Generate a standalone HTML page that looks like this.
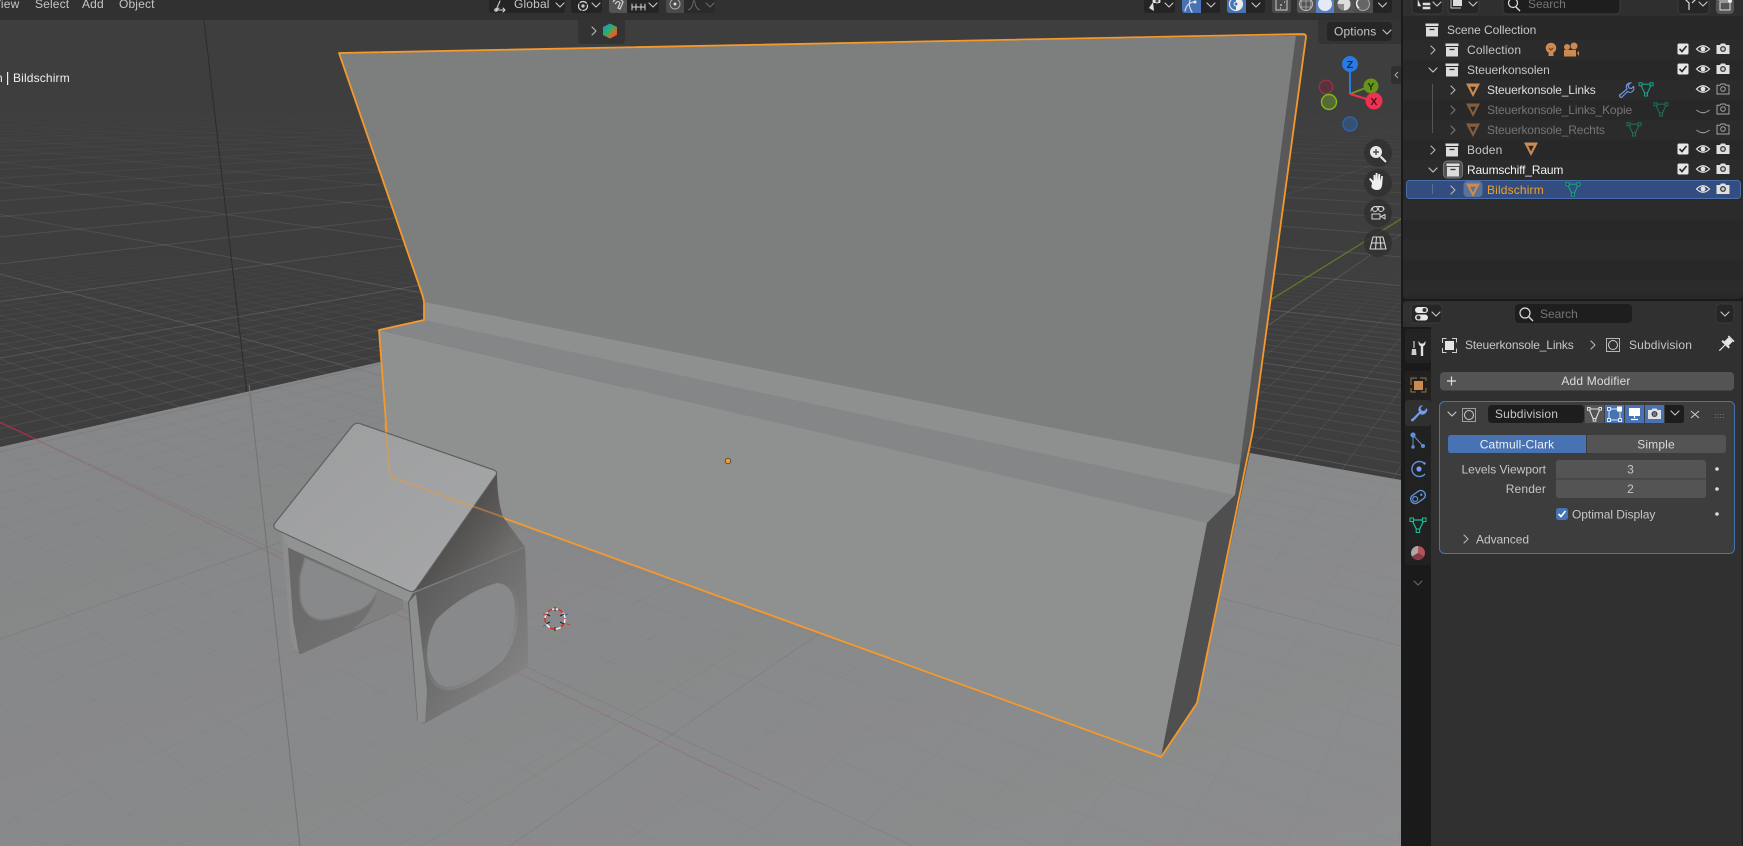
<!DOCTYPE html>
<html><head><meta charset="utf-8"><title>Blender</title>
<style>
html,body{margin:0;padding:0;background:#1a1a1a;width:1743px;height:846px;overflow:hidden}
#wrap{position:relative;width:1743px;height:846px;overflow:hidden;contain:strict}
svg{display:block;overflow:hidden}
text{font-family:"Liberation Sans",sans-serif;font-size:12px;fill:#c6c6c6;letter-spacing:.15px}
.m{text-anchor:middle}.e{text-anchor:end}
.dim{fill:#757575}.w{fill:#efefef}
.n{letter-spacing:-.15px}.t{letter-spacing:-.05px}
.ic{fill:none;stroke:#d8d8d8;stroke-width:1.2;stroke-linecap:round;stroke-linejoin:round}
</style></head><body><div id="wrap">
<svg xmlns="http://www.w3.org/2000/svg" width="1743" height="846" viewBox="0 0 1743 846">
<defs>
<linearGradient id="maj" gradientUnits="userSpaceOnUse" x1="0" y1="110" x2="0" y2="300"><stop offset="0" stop-color="#fff" stop-opacity="0"/><stop offset=".3" stop-color="#fff" stop-opacity=".04"/><stop offset="1" stop-color="#fff" stop-opacity=".13"/></linearGradient>
<linearGradient id="min" gradientUnits="userSpaceOnUse" x1="0" y1="250" x2="0" y2="350"><stop offset="0" stop-color="#fff" stop-opacity="0"/><stop offset="1" stop-color="#fff" stop-opacity=".065"/></linearGradient>
<linearGradient id="flr" x1="0" y1="0" x2="1" y2="1"><stop offset="0" stop-color="#858687"/><stop offset=".5" stop-color="#88898a"/><stop offset="1" stop-color="#8c8d8e"/></linearGradient>
<linearGradient id="slab" x1="0" y1="0" x2="1" y2="1"><stop offset="0" stop-color="#9c9d9e"/><stop offset="1" stop-color="#a6a7a8"/></linearGradient>
<linearGradient id="side" gradientUnits="userSpaceOnUse" x1="450" y1="525" x2="500" y2="562"><stop offset="0" stop-color="#4f4d4c"/><stop offset=".5" stop-color="#5d5b5a"/><stop offset="1" stop-color="#6f6e6d"/></linearGradient>
<linearGradient id="face" gradientUnits="userSpaceOnUse" x1="410" y1="600" x2="530" y2="680"><stop offset="0" stop-color="#5c5c5c"/><stop offset="1" stop-color="#858585"/></linearGradient>
<linearGradient id="face2" gradientUnits="userSpaceOnUse" x1="285" y1="540" x2="400" y2="620"><stop offset="0" stop-color="#666"/><stop offset="1" stop-color="#747474"/></linearGradient>
<linearGradient id="rim" gradientUnits="userSpaceOnUse" x1="430" y1="600" x2="515" y2="680"><stop offset="0" stop-color="#5e5e5e"/><stop offset=".6" stop-color="#7c7c7c"/><stop offset="1" stop-color="#9a9a9a"/></linearGradient>
<linearGradient id="hex" x1="0" y1=".15" x2=".85" y2="1"><stop offset="0" stop-color="#1e8fd0"/><stop offset=".45" stop-color="#2fb060"/><stop offset=".8" stop-color="#e8602a"/><stop offset="1" stop-color="#e0302e"/></linearGradient>
<clipPath id="flc"><polygon points="0,447 380,362 1250,453 1401,480 1401,846 0,846"/></clipPath>
<clipPath id="vp"><rect x="0" y="0" width="1401" height="846"/></clipPath>

<symbol id="box" overflow="visible" viewBox="-8 -8 16 16" width="16" height="16"><path d="M-6.5-6.5H6.5V-4H-6.5ZM-6-3H6V6.5H-6Z" fill="#dcdcdc"/><path d="M-2.5-.5H2.5" stroke="#333" stroke-width="1.3"/></symbol>
<symbol id="obj" overflow="visible" viewBox="-8 -8 16 16" width="16" height="16"><path fill-rule="evenodd" d="M-7-6.5H7L0 7ZM-2.8-3.2H2.8L0 2.5Z" fill="#cc8a50"/></symbol>
<symbol id="mesh" overflow="visible" viewBox="-8 -8 16 16" width="16" height="16"><path d="M-5.5-4.8H5.5L.8 5.5H-.8Z" fill="none" stroke="#12a88a" stroke-width="1.1"/><path d="M-7-6.3h3v3h-3zM4-6.3h3v3h-3zM-1.5 4h3v3h-3z" fill="#2b2b2b" stroke="#12a88a" stroke-width="1"/></symbol>
<symbol id="eye" overflow="visible" viewBox="-8 -8 16 16" width="16" height="16"><path d="M-6.5 0Q0-6.5 6.5 0Q0 6.5-6.5 0Z" fill="none" stroke="#e4e4e4" stroke-width="1.2"/><circle r="2.4" fill="#e4e4e4"/></symbol>
<symbol id="eyeo" overflow="visible" viewBox="-8 -8 16 16" width="16" height="16"><path d="M-6.5-1Q0 4.5 6.5-1" fill="none" stroke="#9a9a9a" stroke-width="1.1"/></symbol>
<symbol id="cam" overflow="visible" viewBox="-8 -8 16 16" width="16" height="16"><path d="M-6.5-4H-3L-2-5.5H2L3-4H6.5V5H-6.5Z" fill="#e0e0e0"/><circle r="3" fill="#444"/><circle r="1.6" fill="#ccc"/></symbol>
<symbol id="camo" overflow="visible" viewBox="-8 -8 16 16" width="16" height="16"><path d="M-6-3.7H-3L-2-5H2L3-3.7H6V5H-6Z" fill="none" stroke="#a6a6a6"/><circle r="2.3" fill="none" stroke="#a6a6a6"/></symbol>
<symbol id="chk" overflow="visible" viewBox="-8 -8 16 16" width="16" height="16"><rect x="-5.5" y="-5.5" width="11" height="11" rx="1.5" fill="#e6e6e6"/><path d="M-3.5 0L-1 2.5 3.5-3" fill="none" stroke="#2a2a2a" stroke-width="1.6"/></symbol>
<symbol id="cr" overflow="visible" viewBox="-8 -8 16 16" width="16" height="16"><path d="M-2-4L2 0-2 4" fill="none" stroke="#b8b8b8" stroke-width="1.1" stroke-linecap="round" stroke-linejoin="round"/></symbol>
<symbol id="cd" overflow="visible" viewBox="-8 -8 16 16" width="16" height="16"><path d="M-4-2L0 2 4-2" fill="none" stroke="#c8c8c8" stroke-width="1.1" stroke-linecap="round" stroke-linejoin="round"/></symbol>
</defs>

<!-- VIEWPORT -->
<g clip-path="url(#vp)">
<rect width="1401" height="846" fill="#3e3e3e"/>
<g id="gridDark"></g>
<line x1="204" y1="20" x2="259" y2="500" stroke="#2c2c2c" stroke-width="1"/>
<line x1="0" y1="422" x2="40" y2="441" stroke="#b02840" stroke-width="1.2"/>
<line x1="1272" y1="299" x2="1401" y2="219" stroke="#5d7d2a" stroke-width="1.2"/>
<polygon points="0,447 380,362 1250,453 1401,480 1401,846 0,846" fill="url(#flr)"/>
<g id="gridFloor" clip-path="url(#flc)"></g>
<line x1="249" y1="385" x2="300" y2="846" stroke="#717273" stroke-width="1"/>
<line x1="35" y1="439" x2="760" y2="790" stroke="#a05058" stroke-width="1" opacity=".33"/>
<line x1="422" y1="846" x2="740" y2="648" stroke="#72885a" stroke-width="1" opacity=".35"/>

<!-- Mesh -->
<polygon points="339,53 1306,35 1240,465 424,302" fill="#7d7f7e"/>
<polygon points="425,302 1240,465 1235,495 424,321" fill="#8e908f"/>
<polygon points="424,320 379,330 1207,523 1235,495" fill="#858688"/>
<polygon points="379,330 390,477 1161,757 1207,523" fill="#8f9191"/>
<polygon points="1296,36 1306,36 1253,430 1250,453 1197,703 1161,757 1207,523 1235,495 1240,465" fill="#4f4f4f"/>
<polygon points="1296,36 1306,36 1253,430 1240,465" fill="#575857"/>
<path d="M339,53 L1303,34 Q1306,34 1306,37 L1253,430 L1197,703 L1161,757 L396,479 Q390,477 389.5,470 L379,330 L424,320 L424,302 Q423,296 420,288 Z" fill="none" stroke="#f5992b" stroke-width="1.8" stroke-linejoin="round"/>

<!-- Stand -->
<path d="M287,547 L403,600 L403,609 L301,654 Q296,654 293,648 L282,533 Z" fill="url(#face2)"/>
<path d="M305,558 L378,590 Q372,604 360,610 Q340,618 322,620 Q312,619 307,613 Q301,606 300,597 L300,577 Z" fill="#88898a" stroke="#7d7d7d" stroke-width="1.5"/>
<path d="M378,590 L403,601 L403,609 L352,630 Q372,615 378,590Z" fill="#808080"/>
<polygon points="281,531 414,593 409,602 403,600 287,547" fill="#919292"/>
<polygon points="281,531 288,548 293,620 299,654 294,650 291,640" fill="#8c8d8d"/>
<path d="M497,471 C497,490 499,505 503,517 L525,547 L413,592 Z" fill="url(#side)"/>
<path d="M413,593 L525,547 C527,590 528,640 528,662 Q528,667 525,669 L425,723 Q419,725 417,718 L408,602 Z" fill="url(#face)"/>
<path d="M497,583 C510,584 515,595 515,610 C515,630 510,645 500,658 C485,672 465,684 450,687 C435,688 427,672 427,653 C428,640 430,630 436,620 C445,610 470,590 497,583Z" fill="#88898a" stroke="url(#rim)" stroke-width="7" paint-order="stroke"/>
<polygon points="409,602 416,594 427,690 425,722 420,723 418,720" fill="#8d8e8e"/>
<path d="M413,593 L525,547" stroke="#7e7e7e" stroke-width="1"/>
<path d="M353,425 Q357,422 361,424 L494,470 Q498,472 496,475 L416,589 Q413,593 409,591 L277,530 Q272,527 275,523 Z" fill="url(#slab)" stroke="#5f5f5f" stroke-width="1.2" stroke-linejoin="round"/>
<path d="M385,423 L389.5,470 Q390,477 396,479 L503,517" fill="none" stroke="#f5992b" stroke-width="1.7" stroke-linejoin="round" opacity=".5"/>
<circle cx="728" cy="461" r="2.8" fill="#f5992b" stroke="#444" stroke-width=".8"/>
<!-- 3D cursor -->
<circle cx="555" cy="619" r="10" fill="none" stroke="#e02828" stroke-width="1.4"/>
<circle cx="555" cy="619" r="10" fill="none" stroke="#f4f4f4" stroke-width="1.5" stroke-dasharray="6 5.5" stroke-dashoffset="2"/>
<path d="M555 603v5M555 630v5" stroke="#6aa84a" stroke-width="1.2"/>
<path d="M555 607v4M555 627v4M546 614l4 2M560 622l4 2M546 624l4-2M560 616l4-2" stroke="#222" stroke-width="1"/>
<path d="M543 614l3 1M567 624l3 1" stroke="#d33" stroke-width="1"/><path d="M543 626l3-1M565 615l3-1" stroke="#36d" stroke-width="1"/>

<!-- Gizmo -->
<line x1="1350" y1="94" x2="1350" y2="70" stroke="#2a7ae2" stroke-width="2"/>
<line x1="1350" y1="94" x2="1368" y2="87" stroke="#6a9a1e" stroke-width="2"/>
<line x1="1350" y1="94" x2="1370" y2="100" stroke="#ee3050" stroke-width="2"/>
<circle cx="1350" cy="64" r="8" fill="#2a7ae2"/><text x="1350" y="68" class="m" style="font-size:10.5px;font-weight:bold;fill:#0c2a54">Z</text>
<circle cx="1371" cy="86" r="7.5" fill="#64941c"/><text x="1371" y="90" class="m" style="font-size:10.5px;font-weight:bold;fill:#22340a">Y</text>
<circle cx="1374" cy="101" r="8.5" fill="#f0304f"/><text x="1374" y="105" class="m" style="font-size:10.5px;font-weight:bold;fill:#4f0f1c">X</text>
<circle cx="1326" cy="87" r="6.7" fill="#57343c" stroke="#94304a" stroke-width="1.4"/>
<circle cx="1329" cy="102" r="7.5" fill="#566b33" stroke="#7dbb1a" stroke-width="1.4"/>
<circle cx="1350" cy="124" r="7" fill="#37506f" stroke="#2a64b0" stroke-width="1.4"/>

<!-- nav buttons -->
<g fill="#303030" fill-opacity=".8"><circle cx="1378" cy="153" r="14"/><circle cx="1378" cy="183" r="14"/><circle cx="1378" cy="213" r="14"/><circle cx="1378" cy="243" r="14"/></g>
<circle cx="1376" cy="152" r="6" fill="#e8e8e8"/><path d="M1380.5 156.5L1386 162" stroke="#e8e8e8" stroke-width="2"/><path d="M1373 152h6M1376 149v6" stroke="#333" stroke-width="1.2"/>
<path d="M1372 183 l-3-4 1.5-1 3 3 V175 h1.8 v5 l.4-7 h1.8 l.3 7 .6-6 h1.8 l-.1 7 1.2-5 h1.6 l-.8 9 q-.5 5-5 5 q-4 0-5.8-3Z" fill="#efefef"/>
<g class="ic" style="stroke-width:1"><rect x="1372" y="214" width="8" height="5"/><path d="M1381 216.5l4-2v4.5z"/><circle cx="1375" cy="209" r="2.5"/><circle cx="1381" cy="209" r="2.5"/><path d="M1371 211q0-4 5-4.5h5q3 0 3 3"/></g>
<g class="ic" style="stroke-width:1.1"><path d="M1373 237h10l3 12h-16zM1371.5 243h13M1376.5 237l-1 12M1380 237l1 12"/></g>

<!-- Tab tool region -->
<path d="M578 20h47v20q0 4-4 4h-39q-4 0-4-4z" fill="#333"/>
<use href="#cr" x="586" y="23"/>
<polygon points="610,23.5 617,27 617,35 610,38.5 603,35 603,27" fill="url(#hex)"/>

<!-- Options -->
<path d="M1318 20h83v24h-79q-4 0-4-4z" fill="#343434"/>
<rect x="1327" y="22" width="65" height="19" rx="4" fill="#262626"/>
<text x="1334" y="35.5">Options</text><use href="#cd" x="1379" y="24"/>
<path d="M1401 66h-6q-4 0-4 4v10q0 4 4 4h6z" fill="#303030"/><path d="M1398 72l-3 3 3 3" fill="none" stroke="#aaa"/>

<text x="-4" y="82" class="w">n</text><rect x="7" y="72" width="1.2" height="13" fill="#eee"/><text x="13" y="82" class="w">Bildschirm</text>
</g>

<!-- TOP BAR -->
<rect width="1401" height="20" fill="#313131"/>
<text x="-7" y="8" fill="#ccc">View</text><text x="35" y="8">Select</text><text x="82" y="8">Add</text><text x="119" y="8">Object</text>
<path d="M489-5h76v15q0 3-3 3h-70q-3 0-3-3z" fill="#242424"/>
<g class="ic" style="stroke-width:1"><path d="M496 10L500 1M496 10h9M496 10l3-2M503 8l2 2-2 2"/><circle cx="496" cy="10" r="1.3"/></g>
<text x="514" y="8">Global</text><use href="#cd" x="552" y="-3"/>
<path d="M571-5h31v15q0 3-3 3h-25q-3 0-3-3z" fill="#242424"/>
<g class="ic"><circle cx="583" cy="6" r="4.5" stroke-dasharray="7 2"/><circle cx="583" cy="6" r="1" /></g><use href="#cd" x="588" y="-3"/>
<path d="M609-5h50v15q0 3-3 3h-44q-3 0-3-3z" fill="#242424"/><path d="M609-5h18v18h-15q-3 0-3-3z" fill="#545454"/>
<path d="M613 2q5-7 10 0l-3 7-2-1 2-5q-2-3-4 0l-1 1" fill="none" stroke="#cfcfcf" stroke-width="1.3"/>
<g class="ic" style="stroke-width:1"><path d="M632 7h13M632 4v6M636 4v6M641 4v6M645 4v6"/></g><use href="#cd" x="645" y="-3"/>
<path d="M666-5h49v15q0 3-3 3h-43q-3 0-3-3z" fill="#2a2a2a"/><path d="M666-5h18v18h-15q-3 0-3-3z" fill="#4a4a4a"/>
<circle cx="675" cy="4" r="5" fill="none" stroke="#aaa"/><circle cx="675" cy="4" r="1.5" fill="#ddd"/>
<path d="M688 10q4-1 5-7 1-5 2 0 1 6 5 7" fill="none" stroke="#666"/><use href="#cd" x="702" y="-3" opacity=".4"/>

<!-- right header -->
<path d="M1144-5h31v15q0 3-3 3h-25q-3 0-3-3z" fill="#242424"/>
<path d="M1149 8l5 3-1-9z M1153 3a4 4 0 1 1 7 0" fill="#e0e0e0"/><circle cx="1157" cy="1" r="2" fill="#444" stroke="#ddd"/><use href="#cd" x="1161" y="-3"/>
<path d="M1182-5h38v15q0 3-3 3h-32q-3 0-3-3z" fill="#242424"/><path d="M1182-5h19v18h-16q-3 0-3-3z" fill="#4772b3"/>
<g class="ic"><path d="M1185 11q2-9 10-9M1192 12q-4-6-2-12"/></g><circle cx="1195" cy="2" r="1.5" fill="#eee"/><use href="#cd" x="1203" y="-3"/>
<path d="M1227-5h38v15q0 3-3 3h-32q-3 0-3-3z" fill="#242424"/><path d="M1227-5h19v18h-16q-3 0-3-3z" fill="#4772b3"/>
<circle cx="1236" cy="4" r="6.5" fill="none" stroke="#e8e8e8" stroke-width="1.2"/><path d="M1236-2a6 6 0 0 1 0 12z" fill="#eee"/><circle cx="1236" cy="4" r="2" fill="#4772b3" stroke="#eee"/><use href="#cd" x="1248" y="-3"/>
<path d="M1272-5h19v15q0 3-3 3h-13q-3 0-3-3z" fill="#4a4a4a"/>
<path d="M1276-1h11v11h-11z" fill="none" stroke="#ccc"/><path d="M1280 5h2M1280 8h1M1284 2h1" stroke="#eee"/>
<path d="M1297-5h95v15q0 3-3 3h-89q-3 0-3-3z" fill="#242424"/><path d="M1297-5h19v18h-16q-3 0-3-3z" fill="#545454"/><rect x="1316" y="-5" width="18" height="18" fill="#5b7fbd"/><rect x="1334" y="-5" width="20" height="18" fill="#545454"/><rect x="1354" y="-5" width="19" height="18" fill="#4f4f4f"/>
<circle cx="1306" cy="4" r="6.5" fill="none" stroke="#bbb"/><path d="M1300 1h12M1300 7h12M1306-2v12M1302-1q-2 5 0 10M1310-1q2 5 0 10" fill="none" stroke="#aaa" stroke-width=".8"/>
<circle cx="1325" cy="4" r="7" fill="#e4e9f4"/>
<circle cx="1344" cy="4" r="6.5" fill="#888"/><path d="M1344-2.5a6.5 6.5 0 0 1 0 13z" fill="#ddd"/><path d="M1344-2.5a6.5 6.5 0 0 0 -6.5 6.5h6.5z" fill="#ddd"/>
<circle cx="1363" cy="4" r="6.5" fill="#666" stroke="#aaa"/><path d="M1359 8a5 5 0 0 1 6-9" fill="none" stroke="#eee" stroke-width="1.4"/>
<use href="#cd" x="1374.5" y="-3"/>

<!-- separator -->
<rect x="1401" y="0" width="342" height="846" fill="#1a1a1a"/>

<!-- OUTLINER -->
<path d="M1403 0H1743V295q0 4-4 4H1407q-4 0-4-4Z" fill="#282828"/>
<rect x="1403" y="0" width="340" height="16" fill="#2f2f2f"/>
<g fill="#2b2b2b"><rect x="1403" y="40" width="340" height="20"/><rect x="1403" y="80" width="340" height="20"/><rect x="1403" y="120" width="340" height="20"/><rect x="1403" y="160" width="340" height="20"/><rect x="1403" y="200" width="340" height="20"/><rect x="1403" y="240" width="340" height="20"/><rect x="1403" y="280" width="340" height="15"/></g>
<!-- outliner header -->
<g fill="#262626" stroke="#3d3d3d"><rect x="1412" y="-8" width="31" height="22" rx="4"/><rect x="1448" y="-8" width="31" height="22" rx="4"/><rect x="1503" y="-8" width="117" height="22" rx="4" fill="#1e1e1e"/><rect x="1678" y="-8" width="31" height="22" rx="4"/></g>
<rect x="1716" y="-8" width="18" height="22" rx="4" fill="#555"/>
<path d="M1418 0v6h3M1423 3h7v2h-7zM1423 7h7v2h-7z" fill="#ddd" stroke="#ddd" stroke-width=".6"/><use href="#cd" x="1429" y="-4"/>
<path d="M1453-2h9v8h-9z" fill="#ddd"/><path d="M1451 0v8h10" fill="none" stroke="#ccc"/><use href="#cd" x="1465" y="-4"/>
<circle cx="1513" cy="3" r="4.5" fill="none" stroke="#ddd" stroke-width="1.2"/><path d="M1516 7l4 4" stroke="#ddd" stroke-width="1.3"/><text x="1528" y="8" class="dim t">Search</text>
<path d="M1684-2l5 5v7M1697-2l-5 5" fill="none" stroke="#ddd" stroke-width="1.2"/><use href="#cd" x="1695" y="-4"/>
<path d="M1720 2h10v8h-10zM1719-2h12v2h-12z" fill="none" stroke="#ddd"/><circle cx="1730" cy="1" r="2" fill="#eee"/>

<!-- selected row -->
<rect x="1406.5" y="180.5" width="334" height="18" rx="3" fill="#334d80" stroke="#4a6ea8"/>
<!-- hierarchy lines -->
<path d="M1432.5 84V133" stroke="#555"/><path d="M1432.5 184V194" stroke="#5d6f8f"/>
<!-- active highlight -->
<rect x="1443.5" y="161" width="19" height="17" rx="4" fill="#505050" stroke="#777"/>
<rect x="1463.5" y="181" width="19" height="16" rx="4" fill="#5d7298"/>

<!-- rows -->
<use href="#box" x="1424" y="22"/><text x="1447" y="34" class="t">Scene Collection</text>

<use href="#cr" x="1425" y="42"/><use href="#box" x="1444" y="42"/><text x="1467" y="54">Collection</text>
<circle cx="1551" cy="48" r="5.3" fill="#cc8a50"/><path d="M1548.5 53h5v3h-5z" fill="#cc8a50"/><path d="M1549 48l2 2 2-2" fill="none" stroke="#5a3c20"/>
<g fill="#cc8a50"><circle cx="1567" cy="47" r="3"/><circle cx="1574" cy="46" r="3.5"/><rect x="1564" y="50" width="12" height="6.5"/><path d="M1577 53l2-2v5z"/></g>
<use href="#chk" x="1675" y="41"/><use href="#eye" x="1695" y="41"/><use href="#cam" x="1715" y="41"/>

<use href="#cd" x="1425" y="62"/><use href="#box" x="1444" y="62"/><text x="1467" y="74" class="t">Steuerkonsolen</text>
<use href="#chk" x="1675" y="61"/><use href="#eye" x="1695" y="61"/><use href="#cam" x="1715" y="61"/>

<use href="#cr" x="1445" y="82"/><use href="#obj" x="1465" y="82"/><text x="1487" y="94" class="n" style="fill:#dedede">Steuerkonsole_Links</text>
<path d="M1620 95l7-6a4 4 0 0 1 1-5.5l2.5-.5-2.5 2.5 1 2.5 2.5.5 2-2a4 4 0 0 1-6 5l-6 6q-2 0-2-2.5z" fill="none" stroke="#6f93dc" stroke-width="1.2"/>
<use href="#mesh" x="1638" y="81"/>
<use href="#eye" x="1695" y="81"/><use href="#camo" x="1715" y="81"/>

<use href="#cr" x="1445" y="102" opacity=".55"/><use href="#obj" x="1465" y="102" opacity=".55"/><text x="1487" y="114" class="dim n">Steuerkonsole_Links_Kopie</text>
<use href="#mesh" x="1653" y="101" opacity=".55"/>
<use href="#eyeo" x="1695" y="103"/><use href="#camo" x="1715" y="101"/>

<use href="#cr" x="1445" y="122" opacity=".55"/><use href="#obj" x="1465" y="122" opacity=".55"/><text x="1487" y="134" class="dim n">Steuerkonsole_Rechts</text>
<use href="#mesh" x="1626" y="121" opacity=".55"/>
<use href="#eyeo" x="1695" y="123"/><use href="#camo" x="1715" y="121"/>

<use href="#cr" x="1425" y="142"/><use href="#box" x="1444" y="142"/><text x="1467" y="154">Boden</text>
<use href="#obj" x="1523" y="141"/>
<use href="#chk" x="1675" y="141"/><use href="#eye" x="1695" y="141"/><use href="#cam" x="1715" y="141"/>

<use href="#cd" x="1425" y="162"/><use href="#box" x="1445" y="162"/><text x="1467" y="174" class="n" style="fill:#f2f2f2">Raumschiff_Raum</text>
<use href="#chk" x="1675" y="161"/><use href="#eye" x="1695" y="161"/><use href="#cam" x="1715" y="161"/>

<use href="#cr" x="1445" y="182"/><use href="#obj" x="1465" y="182"/><text x="1487" y="194" style="fill:#efa028">Bildschirm</text>
<use href="#mesh" x="1565" y="181"/>
<use href="#eye" x="1695" y="181"/><use href="#cam" x="1715" y="181"/>

<!-- PROPERTIES -->
<path d="M1403 305q0-4 4-4H1739q4 0 4 4V846H1403Z" fill="#303030"/>
<rect x="1403" y="327" width="28" height="519" fill="#1a1a1a"/>
<rect x="1405" y="329" width="26" height="34" rx="3" fill="#232323"/>
<rect x="1405" y="371" width="26" height="194" rx="3" fill="#212121"/>
<rect x="1405" y="400" width="26" height="26" rx="3" fill="#303030"/>
<rect x="1741.5" y="301" width="1.5" height="545" fill="#222"/>

<rect x="1411" y="304" width="31" height="19" rx="4" fill="#262626" stroke="#3a3a3a"/>
<rect x="1415" y="307" width="13" height="6" rx="3" fill="#e8e8e8"/><rect x="1415" y="314.5" width="13" height="6" rx="3" fill="#e8e8e8"/><circle cx="1424.5" cy="310" r="2" fill="#333"/><circle cx="1418.5" cy="317.5" r="2" fill="#333"/><use href="#cd" x="1428" y="306"/>
<rect x="1515" y="304" width="117" height="19" rx="4" fill="#1e1e1e"/>
<circle cx="1525" cy="313" r="5" fill="none" stroke="#ddd" stroke-width="1.2"/><path d="M1529 317l4 4" stroke="#ddd" stroke-width="1.3"/><text x="1540" y="318" class="dim t">Search</text>
<rect x="1716" y="304" width="18" height="19" rx="4" fill="#262626" stroke="#3a3a3a"/><use href="#cd" x="1717" y="306"/>

<!-- tabs -->
<path d="M1414 341v7" stroke="#cfcfcf" stroke-width="1.2"/><path d="M1412 349h4l.5 6h-5z" fill="#cfcfcf"/>
<path d="M1422 344v12" stroke="#e0e0e0" stroke-width="2.4"/><path d="M1418.5 341q-.5 5 3.5 5.5q4-.5 3.5-5.5l-2 2.5h-3z" fill="#e0e0e0"/>
<rect x="1414" y="381" width="9" height="9" fill="#cc8a50"/><path d="M1411 385v-7h6M1420 378h6v3M1411 388v4h5M1426 388v4h-5" fill="none" stroke="#9c7246" stroke-width="1"/>
<path d="M1412 419l7-7a5 5 0 0 1 1-6l3-1-2.5 3 1 2.5 2.5.5 3-3a5 5 0 0 1-7 6l-7 7.5q-2.5 0-2-2.5z" fill="#6f9eef"/>
<g fill="#5f8fd8"><circle cx="1413" cy="435" r="2.6"/><circle cx="1413" cy="447" r="1.7"/><circle cx="1423" cy="446" r="2"/></g><path d="M1413 435v12M1413 435l10 11" stroke="#5f8fd8" fill="none"/>
<circle cx="1419" cy="469" r="2.6" fill="#6f9eef"/><path d="M1425 464a7.5 7.5 0 1 0 0 10" fill="none" stroke="#5f8fd8" stroke-width="1.4"/><circle cx="1424.5" cy="463.5" r="1.2" fill="#6f9eef"/>
<g transform="rotate(-35 1418 497)"><rect x="1410" y="492.5" width="16" height="9" rx="4.5" fill="none" stroke="#5f8fd8" stroke-width="1.4"/><circle cx="1414.5" cy="497" r="2.5" fill="none" stroke="#5f8fd8" stroke-width="1.2"/><circle cx="1422" cy="497" r="1.2" fill="#5f8fd8"/></g>
<g transform="translate(1418 525)"><path d="M-6-5H6L.8 6H-.8Z" fill="none" stroke="#12c49a" stroke-width="1.2"/><path d="M-8-7h3.5v3.5H-8zM4.500-7H8v3.500H4.500zM-1.800 4h3.500v3.500h-3.500z" fill="#1f1f1f" stroke="#12c49a"/></g>
<circle cx="1418" cy="553" r="7" fill="#b5525a"/><path d="M1418 553v-7a7 7 0 0 0-6 10.5z" fill="#a8a8a8"/><path d="M1418 553l6 3.5a7 7 0 0 1-12 0z" fill="#843a42"/>
<use href="#cd" x="1410" y="575" opacity=".45"/>

<!-- breadcrumb -->
<rect x="1445" y="341" width="9" height="9" fill="#e4e4e4"/><path d="M1442.5 343v-4.5h4M1452 338.5h4.5v4M1442.5 348v4.5h4M1452 352.5h4.5v-4" fill="none" stroke="#cfcfcf"/>
<text x="1465" y="349" class="n">Steuerkonsole_Links</text>
<use href="#cr" x="1585" y="337"/>
<rect x="1606.5" y="338.5" width="13" height="13" fill="none" stroke="#b5b5b5"/><circle cx="1613" cy="345" r="4.5" fill="none" stroke="#cfcfcf"/>
<text x="1629" y="349">Subdivision</text>
<g transform="rotate(45 1725 345)" fill="#e6e6e6"><rect x="1722" y="337" width="6" height="6"/><rect x="1720" y="343" width="10" height="2"/><rect x="1721" y="335.5" width="8" height="1.5"/><path d="M1725 345v8" stroke="#e6e6e6" stroke-width="1.2"/></g>

<rect x="1440" y="372" width="294" height="18.5" rx="4" fill="#545454"/>
<path d="M1447 381h9M1451.5 376.5v9" stroke="#e0e0e0" stroke-width="1.2"/>
<text x="1596" y="385" class="m" style="fill:#dcdcdc">Add Modifier</text>

<!-- modifier panel -->
<rect x="1439.5" y="401.5" width="295" height="152" rx="5" fill="#3d3d3d" stroke="#4772b3"/>
<use href="#cd" x="1444" y="406"/>
<rect x="1462.5" y="408.5" width="13" height="13" fill="none" stroke="#9e9e9e"/><circle cx="1469" cy="415" r="4.5" fill="none" stroke="#cfcfcf"/>
<rect x="1488" y="405" width="96" height="18" rx="4" fill="#1d1d1d"/><text x="1495" y="418">Subdivision</text>
<rect x="1585" y="405" width="19" height="18" fill="#545454"/><rect x="1605" y="405" width="19" height="18" fill="#4772b3"/><rect x="1625" y="405" width="19" height="18" fill="#4772b3"/><rect x="1645" y="405" width="19" height="18" fill="#4772b3"/>
<path d="M1665 405h16q3 0 3 3v12q0 3-3 3h-16z" fill="#1d1d1d"/>
<g transform="translate(1594.5 414)"><path d="M-5.5-5H5.5L.8 6H-.8Z" fill="none" stroke="#e2e2e2" stroke-width="1.1"/><path d="M-7-6.5h2.6v2.6H-7zM4.4-6.5H7v2.6H4.4zM-1.3 4.5h2.6v2.6h-2.6z" fill="#545454" stroke="#e2e2e2"/></g>
<rect x="1609" y="409" width="11" height="11" fill="none" stroke="#dfe7f5"/><rect x="1617" y="406.5" width="5" height="5" fill="#fff"/><rect x="1607.5" y="407.5" width="3" height="3" fill="#4772b3" stroke="#dfe7f5"/><rect x="1607.5" y="418.5" width="3" height="3" fill="#4772b3" stroke="#dfe7f5"/><rect x="1618.5" y="418.5" width="3" height="3" fill="#4772b3" stroke="#dfe7f5"/>
<rect x="1629" y="408" width="11" height="8" fill="#fff"/><path d="M1634.5 416v2M1631 419.5h7" stroke="#fff" stroke-width="1.2"/>
<use href="#cam" x="1646.5" y="406" /><circle cx="1654.5" cy="414" r="1.4" fill="#4772b3"/>
<use href="#cd" x="1667" y="405"/>
<path d="M1691 411l8 7M1699 411l-8 7" stroke="#c8c8c8" stroke-width="1.1"/>
<path d="M1715 414.5h10M1715 417.5h10" stroke="#777" stroke-dasharray="1 1.5"/>

<path d="M1448 438q0-3 3-3h135v18h-135q-3 0-3-3z" fill="#4772b3"/><text x="1517" y="448.5" class="m" style="fill:#f0f0f0">Catmull-Clark</text>
<path d="M1587 435h136q3 0 3 3v12q0 3-3 3h-136z" fill="#545454"/><text x="1656" y="448.5" class="m" style="fill:#d8d8d8">Simple</text>
<text x="1546" y="473.5" class="e" style="letter-spacing:0">Levels Viewport</text>
<text x="1546" y="493" class="e">Render</text>
<path d="M1556 463q0-3 3-3h144q3 0 3 3v15.5h-150z" fill="#545454"/><path d="M1556 479.5h150v15.5q0 3-3 3h-144q-3 0-3-3z" fill="#545454"/>
<text x="1630.5" y="473.5" class="m">3</text><text x="1630.5" y="493" class="m">2</text>
<circle cx="1717" cy="469" r="1.8" fill="#dcdcdc"/><circle cx="1717" cy="489" r="1.8" fill="#dcdcdc"/><circle cx="1717" cy="514" r="1.8" fill="#dcdcdc"/>
<rect x="1556" y="508" width="12" height="12" rx="2.5" fill="#4772b3"/><path d="M1558.5 514l2.5 2.5 4.5-5.5" fill="none" stroke="#fff" stroke-width="1.7"/>
<text x="1572" y="518.5" class="t">Optimal Display</text>
<use href="#cr" x="1458" y="531"/><text x="1476" y="543.5" class="t">Advanced</text>
</svg>
</div>
<script>
(function(){
var NS="http://www.w3.org/2000/svg";
function fam(p,V,X,stroke,w){
  var y0=100,y1=846,r=925,l=document.createElementNS(NS,"line");
  l.setAttribute("x1",V[0]+(X-V[0])*(y0-V[1])/r);l.setAttribute("y1",y0);
  l.setAttribute("x2",V[0]+(X-V[0])*(y1-V[1])/r);l.setAttribute("y2",y1);
  l.setAttribute("stroke",stroke);l.setAttribute("stroke-width",w);
  p.appendChild(l);
}
var A=[-750,75],B=[1633,75];
function build(p,maj,min,minW){
  var k;
  for(k=-60;k<400;k++){ if(k%10) fam(p,A,1245+k*149,min,minW); }
  for(k=-500;k<120;k++){ if(k%10) fam(p,B,-3705+k*133,min,minW); }
  for(k=-6;k<40;k++){ fam(p,A,1245+k*1490,maj,1); }
  for(k=-50;k<12;k++){ fam(p,B,-3705+k*1330,maj,1); }
}
build(document.getElementById("gridDark"),"url(#maj)","url(#min)",1);
build(document.getElementById("gridFloor"),"rgba(60,60,62,.11)","rgba(60,60,62,.025)",1);
})();
</script>
</body></html>
